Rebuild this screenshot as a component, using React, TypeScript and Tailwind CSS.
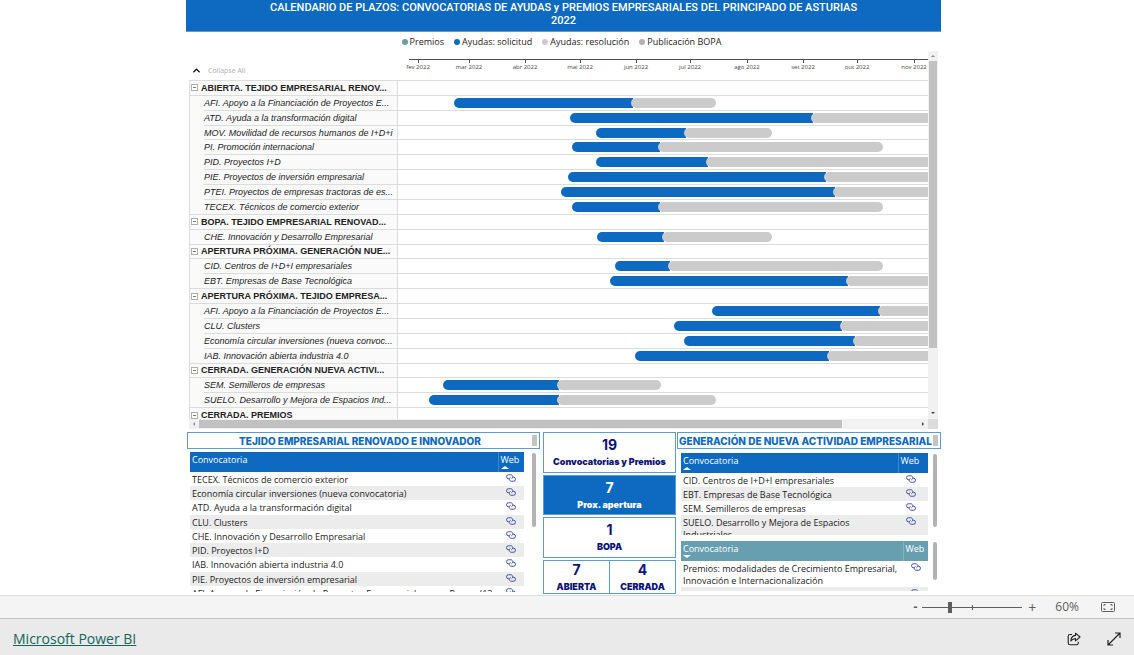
import React, { ReactNode } from "react";
import { ChevronUp } from "lucide-react";

type GanttRow = {
  label: string;
  group?: boolean;
  // positions on the 0..530 time scale: start, end of application, end of resolution
  bar?: [number, number, number];
};

const SCALE = 530;
const pct = (n: number) => `${(n / SCALE) * 100}%`;

const rows: GanttRow[] = [
  { label: "ABIERTA. TEJIDO EMPRESARIAL RENOV...", group: true },
  { label: "AFI. Apoyo a la Financiación de Proyectos E...", bar: [56, 235, 318] },
  { label: "ATD. Ayuda a la transformación digital", bar: [172, 415, 540] },
  { label: "MOV. Movilidad de recursos humanos de I+D+i", bar: [198, 288, 374] },
  { label: "PI. Promoción internacional", bar: [174, 262, 485] },
  { label: "PID. Proyectos I+D", bar: [198, 310, 540] },
  { label: "PIE. Proyectos de inversión empresarial", bar: [170, 428, 540] },
  { label: "PTEI. Proyectos de empresas tractoras de es...", bar: [163, 437, 540] },
  { label: "TECEX. Técnicos de comercio exterior", bar: [174, 262, 485] },
  { label: "BOPA. TEJIDO EMPRESARIAL RENOVAD...", group: true },
  { label: "CHE. Innovación y Desarrollo Empresarial", bar: [199, 266, 374] },
  { label: "APERTURA PRÓXIMA. GENERACIÓN NUE...", group: true },
  { label: "CID. Centros de I+D+I empresariales", bar: [217, 272, 485] },
  { label: "EBT. Empresas de Base Tecnológica", bar: [212, 450, 540] },
  { label: "APERTURA PRÓXIMA. TEJIDO EMPRESA...", group: true },
  { label: "AFI. Apoyo a la Financiación de Proyectos E...", bar: [314, 482, 540] },
  { label: "CLU. Clusters", bar: [276, 444, 540] },
  { label: "Economía circular inversiones (nueva convoc...", bar: [286, 457, 540] },
  { label: "IAB. Innovación abierta industria 4.0", bar: [237, 431, 540] },
  { label: "CERRADA. GENERACIÓN NUEVA ACTIVI...", group: true },
  { label: "SEM. Semilleros de empresas", bar: [45, 161, 263] },
  { label: "SUELO. Desarrollo y Mejora de Espacios Ind...", bar: [31, 161, 318] },
  { label: "CERRADA. PREMIOS", group: true },
];

const months: [string, number][] = [
  ["fev 2022", 20],
  ["mar 2022", 71],
  ["abr 2022", 127],
  ["mai 2022", 182],
  ["jun 2022", 238],
  ["jul 2022", 292],
  ["ago 2022", 349],
  ["set 2022", 405],
  ["out 2022", 459],
  ["nov 2022", 516],
];

const legend = [
  { label: "Premios", dot: "bg-[#679fb0]" },
  { label: "Ayudas: solicitud", dot: "bg-[#0e6ac0]" },
  { label: "Ayudas: resolución", dot: "bg-[#cbcbcb]" },
  { label: "Publicación BOPA", dot: "bg-[#b3b3b3]" },
];

const renovado = [
  "TECEX. Técnicos de comercio exterior",
  "Economía circular inversiones (nueva convocatoria)",
  "ATD. Ayuda a la transformación digital",
  "CLU. Clusters",
  "CHE. Innovación y Desarrollo Empresarial",
  "PID. Proyectos I+D",
  "IAB. Innovación abierta industria 4.0",
  "PIE. Proyectos de inversión empresarial",
  "AFI. Apoyo a la Financiación de Proyectos Empresariales para Pymes (13",
];

const nueva = [
  "CID. Centros de I+D+I empresariales",
  "EBT. Empresas de Base Tecnológica",
  "SEM. Semilleros de empresas",
  "SUELO. Desarrollo y Mejora de Espacios Industriales",
];

const premios = [
  "Premios: modalidades de Crecimiento Empresarial, Innovación e Internacionalización",
  "Premios RADAR",
];

function LinkIcon() {
  return (
    <svg viewBox="0 0 20 16" className="block h-2 w-[10px]" fill="none" stroke="#2438a0" strokeWidth="1.7">
      <path d="M6.5 9.5H5A4 4 0 0 1 5 1.5H9.5A4 4 0 0 1 13.2 7" />
      <path d="M13.5 6.5H15A4 4 0 0 1 15 14.5H10.5A4 4 0 0 1 6.8 9" />
      <path d="M6.8 9A4 4 0 0 1 9 6.8M13.2 7A4 4 0 0 1 11 9.4" />
    </svg>
  );
}

function GanttLine({ row, first, afterGroup }: { row: GanttRow; first: boolean; afterGroup: boolean }) {
  const full = row.group || first || afterGroup;
  return (
    <div className="flex min-h-0">
      <div className={`w-[209px] shrink-0 border-x border-[#dcdcdc] bg-[#fafafa] ${full ? "" : "pl-[14px]"}`}>
        <div className={`flex h-full items-center border-t border-[#dcdcdc] ${full && !row.group ? "pl-[14px]" : ""}`}>
          {row.group ? (
            <button type="button" aria-label="Collapse" className="mr-[3px] ml-px flex size-[7px] shrink-0 items-center justify-center border border-[#a9b0b0] bg-white">
              <span className="h-px w-[3px] bg-[#777777]" />
            </button>
          ) : null}
          <span className={`text-[9px] leading-3 whitespace-nowrap text-[#222222] ${row.group ? "font-bold" : "italic"}`}>{row.label}</span>
        </div>
      </div>
      <div className="flex min-w-0 flex-1 items-center overflow-hidden border-t border-[#dcdcdc]">
        {row.bar ? (
          <>
            <div className="shrink-0" style={{ width: pct(row.bar[0]) }} />
            <div className="h-[10px] shrink-0 rounded-l-full bg-[#0e6ac0]" style={{ width: pct(row.bar[1] - row.bar[0]) }} />
            <div className="-ml-[2px] h-[10px] shrink-0 rounded-full bg-[#cbcbcb]" style={{ width: pct(row.bar[2] - row.bar[1] + 2) }} />
          </>
        ) : null}
      </div>
    </div>
  );
}

function Gantt() {
  return (
    <section className="mx-[3px] grid grid-cols-[minmax(0,1fr)_10px] grid-rows-[368px_10px] font-['Liberation_Sans',sans-serif]">
      <div className="overflow-hidden">
        <div className="flex h-[29px]">
          <button type="button" className="flex w-[209px] shrink-0 items-end gap-[6px] pb-1 pl-[2px] text-[7px] leading-[10px] text-[#b0b0b0]">
            <ChevronUp className="size-[11px] text-black" strokeWidth={3} />
            <span className="font-['Open_Sans',sans-serif]">Collapse All</span>
          </button>
          <svg className="h-[29px] min-w-0 flex-1" role="img" aria-label="2022">
            <rect x={pct(11)} y="8" width="100%" height="1" fill="#505050" />
            {months.map(([name, x]) => (
              <React.Fragment key={name}>
                <rect x={pct(x)} y="8" width="1" height="4" fill="#505050" />
                <text x={pct(x)} y="18" textAnchor="middle" className="fill-[#444444] font-['Open_Sans',sans-serif] text-[6px]">{name}</text>
              </React.Fragment>
            ))}
          </svg>
        </div>
        <div className="grid h-[342px] auto-rows-fr">
          {rows.map((row, i) => (
            <GanttLine key={i} row={row} first={i === 0} afterGroup={i > 0 && !!rows[i - 1].group} />
          ))}
        </div>
      </div>
      <div className="flex flex-col items-center bg-[#f1f1f1]" aria-hidden>
        <span className="flex h-[10px] items-center"><span className="border-x-2 border-b-2 border-x-transparent border-b-[#8a8a8a]" /></span>
        <span className="h-[287px] w-2 bg-[#c1c1c1]" />
        <span className="mt-auto flex h-3 items-center"><span className="border-x-2 border-t-2 border-x-transparent border-t-[#404040]" /></span>
      </div>
      <div className="flex items-center bg-[#f1f1f1]" aria-hidden>
        <span className="flex w-[10px] justify-center"><span className="border-y-2 border-r-2 border-y-transparent border-r-[#8a8a8a]" /></span>
        <span className="h-2 w-[87%] bg-[#c1c1c1]" />
        <span className="ml-auto flex w-[10px] justify-center"><span className="border-y-2 border-l-2 border-y-transparent border-l-[#404040]" /></span>
      </div>
      <div className="bg-[#dcdcdc]" />
    </section>
  );
}

function PanelTitle({ children }: { children: ReactNode }) {
  return (
    <div className="flex h-[17px] items-center border border-[#5b9bd8] pr-[2px]">
      <h2 className="flex-1 pt-px text-center font-['Inter',sans-serif] text-[10px] leading-3 font-extrabold whitespace-nowrap text-[#0e6ac0]">{children}</h2>
      <span className="h-[11px] w-[5px] shrink-0 bg-[#c4c4c4]" />
    </div>
  );
}

type TableProps = {
  items: string[];
  head: string;
  size: string;
  webCol: string;
  sort: "name" | "nameDesc" | "web";
};

function LinksTable({ items, head, size, webCol, sort }: TableProps) {
  const up = <span className="block h-0 w-0 border-x-4 border-b-[3px] border-x-transparent border-b-white" />;
  const down = <span className="block h-0 w-0 border-x-4 border-t-[3px] border-x-transparent border-t-white" />;
  return (
    <table className={`w-full table-fixed border-collapse text-[9px] leading-3 text-[#222222] ${size}`}>
      <thead>
        <tr className={`h-5 text-left align-top text-white ${head}`}>
          <th className="h-5 p-0 pt-[2px] pl-[2px] font-medium">
            Convocatoria
            {sort === "name" ? up : null}
            {sort === "nameDesc" ? down : null}
          </th>
          <th className={`h-5 border-l border-white/20 p-0 pt-[2px] pl-[2px] font-medium ${webCol}`}>
            Web
            {sort === "web" ? up : null}
          </th>
        </tr>
      </thead>
      <tbody>
        {items.map((item) => (
          <tr key={item} className="align-top even:bg-[#ececec]">
            <td className="p-0 pt-[2px] pl-[2px]">{item}</td>
            <td className="p-0 pt-[2px] pl-2">
              <a href="#" aria-label={item} className="inline-block align-top"><LinkIcon /></a>
            </td>
          </tr>
        ))}
      </tbody>
    </table>
  );
}

function Card({ value, label, className = "" }: { value: number; label: string; className?: string }) {
  return (
    <div className={`flex flex-col items-center gap-[3px] border border-[#5b9bd8] font-['Inter',sans-serif] whitespace-nowrap ${className}`}>
      <span className="text-[14px] leading-4 font-bold">{value}</span>
      <span className="text-[9px] leading-3 font-black">{label}</span>
    </div>
  );
}

export default function App() {
  return (
    <div className="flex min-h-screen flex-col bg-white font-['Open_Sans','Noto_Sans',sans-serif]">
      <main className="flex-1 pr-[7px]">
        <div className="mx-auto w-full max-w-[755px]">
          <h1 className="h-8 border-b border-[#5b9bd8] bg-[#0e6ac0] pt-px text-center font-['Roboto',sans-serif] text-[11px] leading-[13px] font-medium text-white">
            CALENDARIO DE PLAZOS: CONVOCATORIAS DE AYUDAS y PREMIOS EMPRESARIALES DEL PRINCIPADO DE ASTURIAS
            <br />
            2022
          </h1>
          <ul className="flex h-[19px] items-center justify-center gap-[10px] pr-1 text-[9px] text-[#222222]">
            {legend.map((item) => (
              <li key={item.label} className="flex items-center gap-[2px]">
                <span className={`size-[6px] rounded-full ${item.dot}`} />
                {item.label}
              </li>
            ))}
          </ul>
          <Gantt />
          <div className="mt-[3px] ml-px grid h-[163px] grid-cols-[355fr_133fr_264fr] gap-px">
            <section className="min-w-0 pr-[2px]">
              <PanelTitle>TEJIDO EMPRESARIAL RENOVADO E INNOVADOR</PanelTitle>
              <div className="mt-[3px] flex gap-2 pr-1 pl-[3px]">
                <div className="h-[140px] min-w-0 flex-1 overflow-hidden">
                  <LinksTable items={renovado} head="bg-[#0e6ac0]" size="h-[148px]" webCol="w-[26px]" sort="web" />
                </div>
                <span className="mt-px h-[74px] w-1 rounded-full bg-[#b3b3b3]" />
              </div>
            </section>
            <section className="flex min-w-0 flex-col gap-[2px] pb-px text-[#0d1478]">
              <Card value={19} label="Convocatorias y Premios" className="h-[41px] pt-1" />
              <Card value={7} label="Prox. apertura" className="h-10 bg-[#0e6ac0] pt-1 text-white" />
              <Card value={1} label="BOPA" className="h-[41px] pt-1" />
              <div className="flex min-h-0 flex-1">
                <Card value={7} label="ABIERTA" className="min-w-0 flex-1 pt-px" />
                <Card value={4} label="CERRADA" className="min-w-0 flex-1 border-l-0 pt-px" />
              </div>
            </section>
            <section className="min-w-0">
              <PanelTitle>GENERACIÓN DE NUEVA ACTIVIDAD EMPRESARIAL</PanelTitle>
              <div className="mt-1 flex gap-[5px] pr-1 pl-1">
                <div className="h-[82px] min-w-0 flex-1 overflow-hidden">
                  <LinksTable items={nueva} head="bg-[#0e6ac0]" size="" webCol="w-[30px]" sort="name" />
                </div>
                <span className="mt-px h-[73px] w-1 rounded-full bg-[#b3b3b3]" />
              </div>
              <div className="mt-[6px] flex gap-[5px] pr-1 pl-1">
                <div className="h-[50px] min-w-0 flex-1 overflow-hidden">
                  <LinksTable items={premios} head="bg-[#679fb0]" size="" webCol="w-[25px]" sort="nameDesc" />
                </div>
                <span className="mt-px h-[38px] w-1 rounded-full bg-[#b3b3b3]" />
              </div>
            </section>
          </div>
        </div>
      </main>
      <div className="flex h-6 items-center justify-end border-y border-t-[#dedede] border-b-[#c2c2c2] bg-[#f4f4f4] pr-[19px] text-[12px] text-[#605e5c]">
        <button type="button" aria-label="Zoom out" className="mr-1 w-[6px] font-bold">-</button>
        <div className="relative flex w-[100px] items-center">
          <input
            type="range"
            aria-label="Zoom"
            min={0}
            max={100}
            defaultValue={27}
            className="h-[11px] w-full appearance-none bg-transparent [&::-webkit-slider-runnable-track]:h-px [&::-webkit-slider-runnable-track]:bg-[#605e5c] [&::-webkit-slider-thumb]:-mt-[5px] [&::-webkit-slider-thumb]:h-[11px] [&::-webkit-slider-thumb]:w-1 [&::-webkit-slider-thumb]:appearance-none [&::-webkit-slider-thumb]:bg-[#605e5c]"
          />
          <span className="absolute top-[3px] left-1/2 h-[5px] w-px bg-[#605e5c]" />
        </div>
        <button type="button" aria-label="Zoom in" className="ml-[5px] w-[10px] text-[14px]">+</button>
        <span className="ml-[18px]">60%</span>
        <button type="button" aria-label="Fit to page" className="ml-[22px]">
          <svg viewBox="0 0 14 10" className="block h-[10px] w-[14px]" fill="none" stroke="#605e5c">
            <rect x="0.5" y="0.5" width="13" height="9" rx="1" />
            <path d="M3 4V2.5H4.5M9.5 2.5H11V4M11 6V7.5H9.5M4.5 7.5H3V6" />
          </svg>
        </button>
      </div>
      <footer className="flex h-9 items-center bg-[#eaeaea] pt-1 pr-[13px] pl-[13px]">
        <a href="#" className="text-[14px] leading-5 text-[#12655a] underline">Microsoft Power BI</a>
        <button type="button" aria-label="Share" className="ml-auto">
          <svg viewBox="0 0 14 14" className="block size-[14px]" fill="none" stroke="#222222" strokeWidth="1.1">
            <path d="M5 2.5H3A1.8 1.8 0 0 0 1.2 4.3V11A1.8 1.8 0 0 0 3 12.8H9.5A1.8 1.8 0 0 0 11.3 11V9.8" />
            <path d="M8.5 1.2L13 5L8.5 8.8V6.6C6.3 6.6 5 7.4 3.8 9C4 6 5.5 3.6 8.5 3.4Z" strokeLinejoin="round" />
          </svg>
        </button>
        <button type="button" aria-label="Full screen" className="ml-[26px]">
          <svg viewBox="0 0 14 14" className="block size-[14px]" fill="none" stroke="#222222" strokeWidth="1.2">
            <path d="M1 13L13 1M8 1H13V6M1 8V13H6" />
          </svg>
        </button>
      </footer>
    </div>
  );
}
